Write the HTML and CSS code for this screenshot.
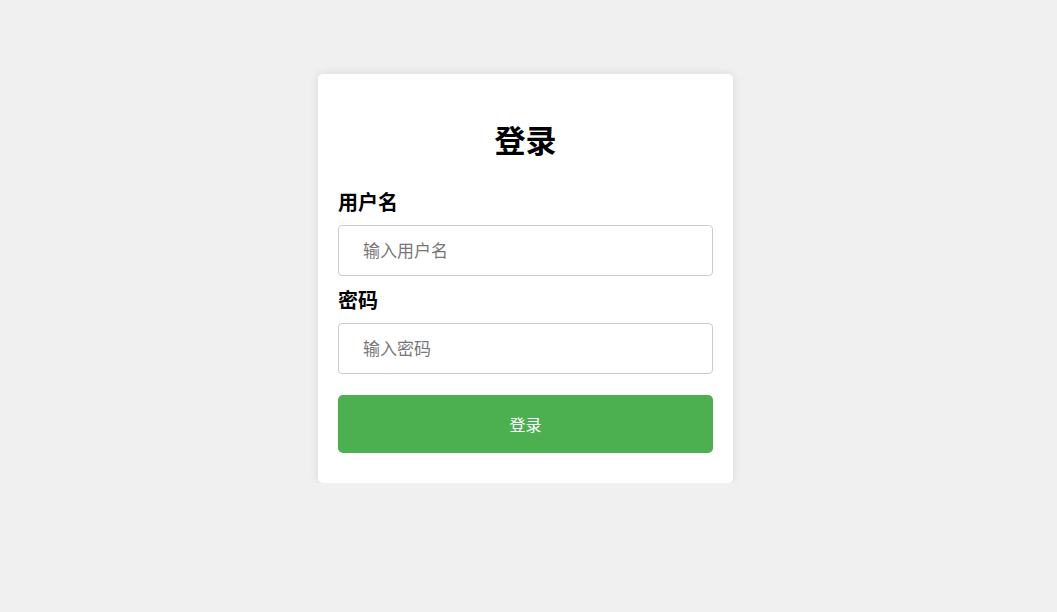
FILE: index.html
```html
<!DOCTYPE html>
<html lang="zh-CN">
<head>
    <meta charset="UTF-8">
    <meta name="viewport" content="width=device-width, initial-scale=1.0">
    <title>登录</title>
    <link rel="stylesheet" href="styles.css">
</head>
<body>
    <!-- Login card -->
    <div class="login-container">
        <h1>登录</h1>
        <form class="login-form">
            <label for="username">用户名</label>
            <input type="text" id="username" placeholder="输入用户名">
            <label for="password">密码</label>
            <input type="password" id="password" placeholder="输入密码">
            <button type="submit">登录</button>
        </form>
    </div>
</body>
</html>
```

FILE: styles.css
```css
body {
    font-family: "Noto Sans CJK SC", "Noto Sans", sans-serif;
    background-color: #f0f0f0;
    margin: 0;
    padding: 0 6px 0 0;
    display: flex;
    justify-content: center;
}

.login-container {
    width: 375px;
    margin-top: 74px;
    padding: 20px 20px 30px;
    background-color: #fff;
    border-radius: 5px;
    box-shadow: 0 0 10px rgba(0, 0, 0, 0.1);
}

h1 {
    text-align: center;
    font-size: 31px;
    line-height: 44px;
    margin: 23px 0 27px;
    color: #000;
}

.login-form {
    display: flex;
    flex-direction: column;
}

.login-form label {
    font-size: 20px;
    font-weight: bold;
    line-height: 28px;
    margin-bottom: 9px;
    color: #000;
}

.login-form input {
    box-sizing: border-box;
    height: 51px;
    padding: 0 24px 2px;
    margin-bottom: 10px;
    border: 1px solid #ccc;
    border-radius: 4px;
    font-family: inherit;
    font-size: 17px;
    color: #333;
}

.login-form input::placeholder {
    color: #777;
}

.login-form button {
    height: 58px;
    margin-top: 11px;
    padding-bottom: 2px;
    background-color: #4caf50;
    border: none;
    border-radius: 5px;
    color: #fff;
    font-family: inherit;
    font-size: 16px;
    cursor: pointer;
}

.login-form button:hover {
    background-color: #45a049;
}
```
